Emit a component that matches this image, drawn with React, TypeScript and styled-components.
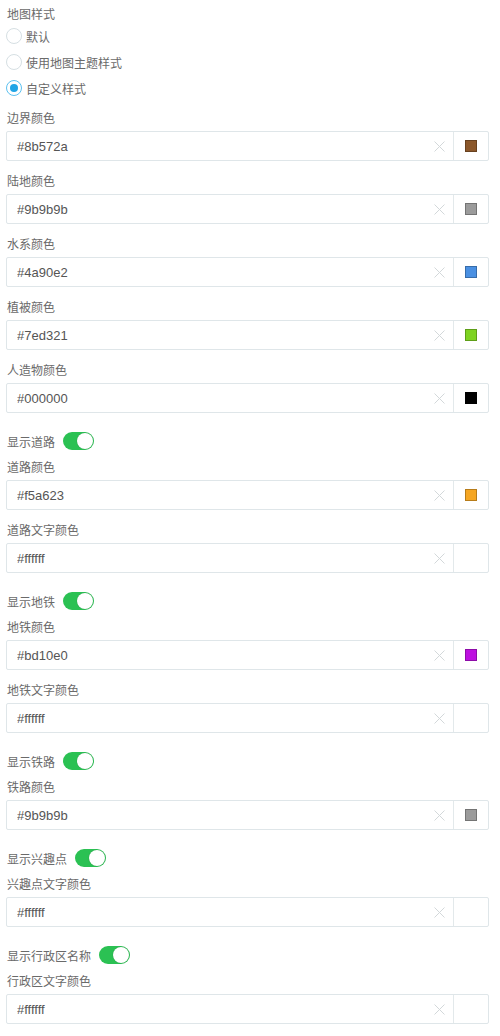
import React, { useState } from "react";
import styled, { createGlobalStyle } from "styled-components";

const Global = createGlobalStyle`
  html, body { margin: 0; padding: 0; background: #fff; }
  body { font-family: "Liberation Sans", "Noto Sans CJK SC", sans-serif; }
`;

const Panel = styled.div`
  width: 500px;
  box-sizing: border-box;
  padding: 5px 11px 0 6px;
  display: flex;
  flex-direction: column;
`;

const Label = styled.div`
  font-size: 12px;
  line-height: 20px;
  height: 20px;
  color: #6a6a6a;
  padding-left: 1px;
`;

const RadioGroup = styled.div`
  display: flex;
  flex-direction: column;
  margin: -2px 0 8px;
`;

const RadioRow = styled.label`
  display: flex;
  align-items: center;
  height: 26px;
  gap: 4px;
  font-size: 12px;
  color: #6a6a6a;
  cursor: pointer;
`;

const RadioCircle = styled.span<{ $checked: boolean }>`
  width: 16px;
  height: 16px;
  box-sizing: border-box;
  border-radius: 50%;
  border: 1px solid ${(p) => (p.$checked ? "#5cc1f0" : "#d6dfe3")};
  display: flex;
  align-items: center;
  justify-content: center;
  background: #fff;
  &::after {
    content: "";
    width: 8px;
    height: 8px;
    border-radius: 50%;
    background: ${(p) => (p.$checked ? "#20a5e6" : "transparent")};
  }
`;

const Field = styled.div`
  display: flex;
  flex-direction: column;
  margin-bottom: 11px;
`;

const InputBox = styled.div`
  margin-top: 2px;
  height: 30px;
  box-sizing: border-box;
  border: 1px solid #dfe6e9;
  border-radius: 2px;
  display: flex;
  align-items: stretch;
`;

const TextInput = styled.input`
  flex: 1;
  border: none;
  outline: none;
  background: transparent;
  font-family: "Liberation Sans", "Noto Sans CJK SC", sans-serif;
  font-size: 13px;
  color: #555;
  padding: 0 0 0 10px;
  min-width: 0;
`;

const Clear = styled.span`
  width: 28px;
  display: flex;
  align-items: center;
  justify-content: center;
  color: #d3d8da;
`;

const SwatchCell = styled.div`
  width: 34px;
  border-left: 1px solid #e3e9eb;
  display: flex;
  align-items: center;
  justify-content: center;
`;

const Swatch = styled.span<{ $color: string }>`
  width: 12px;
  height: 12px;
  box-sizing: border-box;
  background: ${(p) => p.$color};
  border: 1px solid ${(p) => (p.$color.toLowerCase() === "#ffffff" ? "transparent" : "rgba(0,0,0,0.25)")};
`;

const ToggleRow = styled.div`
  height: 34px;
  display: flex;
  align-items: center;
  gap: 8px;
  font-size: 12px;
  color: #6a6a6a;
  padding-left: 1px;
`;

const Toggle = styled.span<{ $on: boolean }>`
  width: 31px;
  height: 18px;
  box-sizing: border-box;
  border-radius: 9px;
  background: ${(p) => (p.$on ? "#2bc153" : "#e5e5e5")};
  display: flex;
  align-items: center;
  justify-content: ${(p) => (p.$on ? "flex-end" : "flex-start")};
  padding: 1px;
  cursor: pointer;
  &::after {
    content: "";
    width: 16px;
    height: 16px;
    border-radius: 50%;
    background: #fff;
    box-shadow: 0 0 1px rgba(0, 0, 0, 0.3);
  }
`;

const XIcon = () => (
  <svg width="11" height="11" viewBox="0 0 11 11">
    <path d="M0.5 0.5 L10.5 10.5 M10.5 0.5 L0.5 10.5" stroke="currentColor" strokeWidth="1" fill="none" />
  </svg>
);

const ColorField = ({ label, value }: { label: string; value: string }) => (
  <Field>
    <Label>{label}</Label>
    <InputBox>
      <TextInput defaultValue={value} />
      <Clear>
        <XIcon />
      </Clear>
      <SwatchCell>
        <Swatch $color={value} />
      </SwatchCell>
    </InputBox>
  </Field>
);

const Switch = ({ label }: { label: string }) => {
  const [on, setOn] = useState(true);
  return (
    <ToggleRow>
      {label}
      <Toggle $on={on} onClick={() => setOn(!on)} />
    </ToggleRow>
  );
};

export default function App() {
  const [style, setStyle] = useState(2);
  const opts = ["默认", "使用地图主题样式", "自定义样式"];
  return (
    <Panel>
      <Global />
      <Label>地图样式</Label>
      <RadioGroup>
        {opts.map((o, i) => (
          <RadioRow key={o} onClick={() => setStyle(i)}>
            <RadioCircle $checked={style === i} />
            {o}
          </RadioRow>
        ))}
      </RadioGroup>
      <ColorField label="边界颜色" value="#8b572a" />
      <ColorField label="陆地颜色" value="#9b9b9b" />
      <ColorField label="水系颜色" value="#4a90e2" />
      <ColorField label="植被颜色" value="#7ed321" />
      <ColorField label="人造物颜色" value="#000000" />
      <Switch label="显示道路" />
      <ColorField label="道路颜色" value="#f5a623" />
      <ColorField label="道路文字颜色" value="#ffffff" />
      <Switch label="显示地铁" />
      <ColorField label="地铁颜色" value="#bd10e0" />
      <ColorField label="地铁文字颜色" value="#ffffff" />
      <Switch label="显示铁路" />
      <ColorField label="铁路颜色" value="#9b9b9b" />
      <Switch label="显示兴趣点" />
      <ColorField label="兴趣点文字颜色" value="#ffffff" />
      <Switch label="显示行政区名称" />
      <ColorField label="行政区文字颜色" value="#ffffff" />
    </Panel>
  );
}
